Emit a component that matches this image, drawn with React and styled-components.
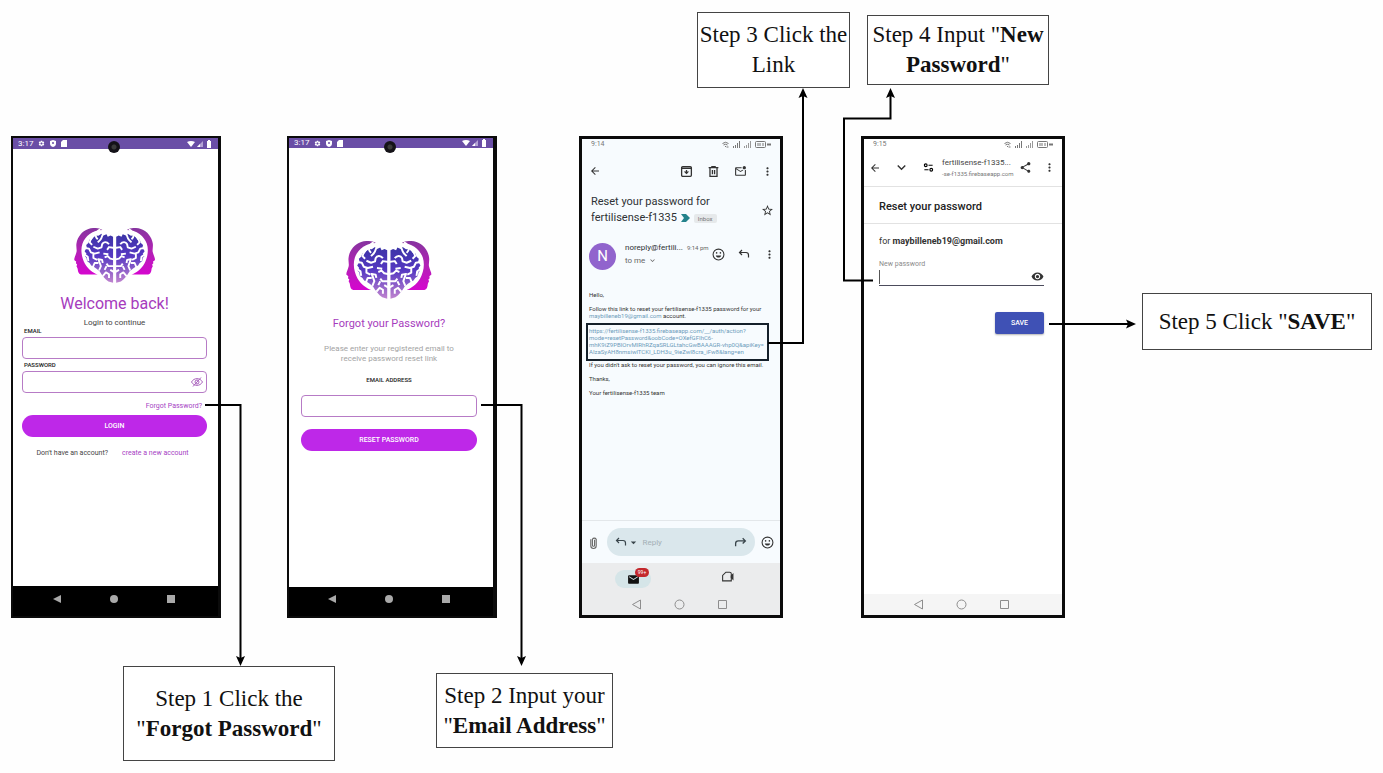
import React, { useId } from "react";
import styled, { createGlobalStyle } from "styled-components";
import {
  MdArrowBack,
  MdMoreVert,
  MdStarOutline,
  MdOutlineMarkEmailUnread,
  MdShare,
  MdVisibility,
  MdMail,
  MdSettings,
  MdExpandMore,
  MdArrowDropDown,
} from "react-icons/md";

const GlobalStyle = createGlobalStyle`
  *, *::before, *::after { box-sizing: border-box; }
  body { margin: 0; background: #fefefe; font-family: Roboto, "Liberation Sans", sans-serif; }
  button, input { font-family: inherit; }
  svg { display: block; flex: none; }
  p, h1, h2 { margin: 0; font-weight: 400; }
`;

/* ---------- canvas ---------- */

const Canvas = styled.main`
  position: relative;
  min-height: 100vh;
  overflow: hidden;
`;

const Connectors = styled.svg`
  position: absolute;
  inset: 0;
  width: 100%;
  height: 100%;
  pointer-events: none;
`;

const Note = styled.div`
  position: absolute;
  left: ${(p) => p.$x}px;
  top: ${(p) => p.$y}px;
  width: ${(p) => p.$w}px;
  height: ${(p) => p.$h}px;
  display: flex;
  align-items: center;
  justify-content: center;
  border: 1px solid #444;
  background: #fff;
  color: #111;
  font: 23px/30px "Liberation Serif", serif;
  text-align: center;
  white-space: nowrap;
`;

const Phone = styled.section`
  position: absolute;
  left: ${(p) => p.$x}px;
  top: 136px;
  width: ${(p) => p.$w}px;
  height: 482px;
  display: flex;
  flex-direction: column;
  border: solid #0b0b0b;
  border-width: ${(p) => p.$border};
  background: ${(p) => p.$bg || "#fff"};
`;

/* ---------- app screens ---------- */

const AppStatus = styled.div`
  position: relative;
  display: flex;
  align-items: center;
  justify-content: space-between;
  height: ${(p) => p.$h}px;
  padding: 0 5px;
  background: #6a4ea6;
  color: #fff;
  font-size: 8px;
  line-height: 10px;
`;

const Cluster = styled.span`
  display: flex;
  align-items: center;
  gap: ${(p) => p.$gap || 4}px;
`;

const Camera = styled.span`
  position: absolute;
  left: 95px;
  top: 3px;
  width: 12px;
  height: 12px;
  border-radius: 50%;
  background: radial-gradient(circle, #3a3a3a 0 2px, #141218 3px);
`;

const AppBody = styled.div`
  flex: 1;
  display: flex;
  flex-direction: column;
  padding: ${(p) => p.$pad};
  text-align: center;
`;

const LogoSvg = styled.svg`
  align-self: center;
  height: ${(p) => p.$h}px;
`;

const AppTitle = styled.h1`
  margin-top: ${(p) => p.$mt}px;
  color: #a63bbd;
  font-size: ${(p) => p.$size}px;
  line-height: ${(p) => p.$lh}px;
`;

const Subtitle = styled.p`
  margin-top: 3px;
  color: #444;
  font-size: 8px;
  line-height: 8px;
`;

const Hint = styled.p`
  margin-top: 12px;
  color: #a3a3a3;
  font-size: 8px;
  line-height: 10px;
`;

const Fields = styled.div`
  display: grid;
  gap: 2px;
`;

const FieldLabel = styled.label`
  margin: ${(p) => p.$margin || "0 2px"};
  color: #222;
  font-size: 6px;
  line-height: 8px;
  font-weight: 500;
  text-align: ${(p) => p.$align || "left"};
`;

const Field = styled.div`
  display: flex;
  align-items: center;
  height: 22px;
  padding: 0 3px;
  border: 1px solid #b77bc6;
  border-radius: 4px;
  background: #fff;
`;

const BareInput = styled.input`
  flex: 1;
  min-width: 0;
  padding: 0;
  border: 0;
  outline: 0;
  background: transparent;
  font-size: 8px;
`;

const IconButton = styled.button`
  display: flex;
  padding: 0;
  border: 0;
  background: none;
  color: ${(p) => p.$color || "#333"};
`;

const PinkLink = styled.a`
  color: #a63fc4;
  font-size: 7px;
  line-height: 8px;
  text-decoration: none;
`;

const ForgotRow = styled.div`
  display: flex;
  justify-content: flex-end;
  padding: 9px 5px 5px;
`;

const PillButton = styled.button`
  height: 22px;
  margin-top: ${(p) => p.$mt || 0}px;
  padding: 0;
  border: 0;
  border-radius: 11px;
  background: #be28e8;
  color: #fff;
  font-size: 7px;
  font-weight: 500;
`;

const SignUp = styled.p`
  display: flex;
  justify-content: center;
  gap: 14px;
  margin-top: 12px;
  color: #444;
  font-size: 7px;
  line-height: 8px;
  padding-right: 4px;
`;

const DarkNav = styled.nav`
  display: flex;
  align-items: center;
  justify-content: center;
  gap: 49px;
  height: ${(p) => p.$h}px;
  padding: 0 4px 5px 0;
  background: #000;
`;

/* ---------- mail / browser screens ---------- */

const PhoneStatus = styled.div`
  display: flex;
  align-items: center;
  justify-content: space-between;
  height: 10px;
  padding: 0 9px;
  color: #777;
  font-size: 7px;
  line-height: 10px;
`;

const MailToolbar = styled.div`
  display: flex;
  align-items: center;
  justify-content: space-between;
  height: 44px;
  padding: 0 6px 0 7px;
`;

const SubjectRow = styled.div`
  display: flex;
  align-items: center;
  justify-content: space-between;
  padding: 1px 6px 0 9px;
`;

const Subject = styled.h1`
  color: #2e3235;
  font-size: 11px;
  line-height: 16px;
`;

const SubjectLine = styled.span`
  display: flex;
  align-items: center;
  gap: 4px;
`;

const Chip = styled.span`
  padding: 0 4px;
  border-radius: 2px;
  background: #e6e9eb;
  color: #777;
  font-size: 6px;
  line-height: 9px;
`;

const Sender = styled.div`
  display: flex;
  align-items: center;
  height: 28px;
  margin: 16px 4px 0 7px;
`;

const Avatar = styled.span`
  width: 27px;
  height: 27px;
  margin-right: 9px;
  border-radius: 50%;
  background: #9164cd;
  color: #fff;
  font-size: 15px;
  line-height: 27px;
  text-align: center;
`;

const SenderText = styled.div`
  flex: 1;
  padding-bottom: 4px;
  color: #2e3235;
  font-size: 8px;
  line-height: 13px;
  white-space: nowrap;
`;

const SenderActions = styled.div`
  display: flex;
  gap: 13px;
  padding-bottom: 4px;
`;

const Muted = styled.span`
  display: flex;
  align-items: center;
  gap: 3px;
  color: #666;
  font-size: ${(p) => p.$size}px;
`;

const MailBody = styled.div`
  flex: 1;
  padding: 21px 6px 0 7px;
  color: #333;
  font-size: 6px;
  line-height: 7px;
  white-space: nowrap;
`;

const Para = styled.p`
  margin-bottom: ${(p) => (p.$tight ? 4 : 7)}px;
`;

const BodyLink = styled.a`
  color: #6d9bbb;
  text-decoration: none;
`;

const LinkFrame = styled.p`
  width: 183px;
  height: 38px;
  margin: 0 0 0 -3px;
  padding: 2px 1px;
  border: 2px solid #15202a;
`;

const ReplyBar = styled.div`
  display: flex;
  align-items: center;
  justify-content: space-between;
  height: 43px;
  padding: 0 6px 0 5px;
  border-top: 1px solid #e3e7ea;
`;

const ReplyPill = styled.button`
  display: flex;
  align-items: center;
  width: 148px;
  height: 28px;
  padding: 0 8px;
  border: 0;
  border-radius: 14px;
  background: #dae7ec;
  color: #a4b0b6;
  font-size: 8px;
`;

const PillIcon = styled.span`
  display: flex;
  color: #39454b;
`;

const Grow = styled.span`
  flex: 1;
  padding-left: 3px;
  text-align: left;
`;

const MailTabs = styled.nav`
  display: flex;
  justify-content: space-between;
  height: 31px;
  padding: 7px 46px 0 33px;
  background: #ebeced;
`;

const TabPill = styled.button`
  position: relative;
  display: flex;
  align-items: center;
  justify-content: center;
  width: 36px;
  height: 18px;
  padding: 0;
  border: 0;
  border-radius: 9px;
  background: #d5e5e8;
  color: #111;
`;

const Badge = styled.span`
  position: absolute;
  left: 20px;
  top: -2px;
  width: 14px;
  border-radius: 5px;
  background: #c3282d;
  color: #fff;
  font-size: 5px;
  line-height: 9px;
`;

const LightNav = styled.nav`
  display: flex;
  align-items: center;
  justify-content: center;
  gap: 32px;
  height: 21px;
  padding-right: 3px;
  background: ${(p) => p.$bg};
`;

const BrowserBar = styled.div`
  display: flex;
  align-items: center;
  height: 38px;
  padding: 0 6px 0 5px;
  border-bottom: 1px solid #e2e2e2;
`;

const Address = styled.div`
  flex: 1;
  margin: 0 5px 0 8px;
  color: #444;
  font-size: 8px;
  line-height: 11px;
  white-space: nowrap;

  small {
    display: block;
    color: #777;
    font-size: 6px;
  }
`;

const Spacer = styled.span`
  width: ${(p) => p.$w}px;
`;

const ResetHeading = styled.h1`
  padding: 3px 15px 0;
  border-bottom: 1px solid #e2e2e2;
  color: #222;
  font-size: 11px;
  font-weight: 500;
  line-height: 33px;
`;

const ResetForm = styled.form`
  flex: 1;
  display: flex;
  flex-direction: column;
  padding: 11px 18px 0 15px;
`;

const ForLine = styled.p`
  color: #333;
  font-size: 9px;
  line-height: 12px;

  b { font-weight: 700; }
`;

const GreyLabel = styled.label`
  margin-top: 13px;
  color: #8b8b8b;
  font-size: 7px;
  line-height: 8px;
`;

const Underlined = styled.div`
  display: flex;
  align-items: center;
  height: 18px;
  border-bottom: 1px solid #4c4c5c;
`;

const Caret = styled.span`
  width: 1px;
  height: 14px;
  background: #555;
`;

const SaveButton = styled.button`
  align-self: flex-end;
  width: 49px;
  height: 22px;
  margin-top: 26px;
  padding: 0;
  border: 0;
  border-radius: 2px;
  background: #3f51b5;
  box-shadow: 0 1px 2px rgba(0, 0, 0, 0.3);
  color: #fff;
  font-size: 7px;
  font-weight: 500;
`;

/* ---------- drawings ---------- */

function BrainHalf({ head, brain }) {
  return (
    <>
      <path
        fill={`url(#${head})`}
        d="M91 6C79-1 61-2 46 3C25 10 11 29 8 49C6 60 10 70 8 77C6 86 0 96 1 102C2 105 7 105 7 108L6 113L10 117L8 122C10 126 12 129 12 133C13 142 16 149 25 149L76 149C62 143 45 132 35 114C25 96 20 72 27 50C35 26 60 6 91 6Z"
      />
      <path
        fill={`url(#${brain})`}
        d="M125 28L117 24L108 28L104 20L94 24L88 18L78 25L70 24L62 30L56 38L50 37L46 48L39 54L41 62L34 74L40 82L35 90L40 95L42 106L50 112L55 120L63 124L72 130L82 138L88 148L96 158L102 165L110 171L125 175Z"
      />
      <g fill="none" stroke="#fff" strokeWidth="6" strokeLinejoin="round">
        <path d="M84 4C66 14 66 27 76 36M68 20C58 26 54 32 50 46L58 54M98 10C88 22 92 30 84 38L76 46M112 52C104 42 94 44 90 52L88 62L76 66L62 60M130 64L112 61L106 70M34 64L48 66L54 78L66 82L82 78M32 84L44 92L46 106M94 82L110 84M62 82L62 96L74 102M130 101L116 98L108 90L98 94M60 126L66 112L78 112M80 136L86 122L78 100L90 102L92 112M130 122L110 122L104 114M104 122L98 134M130 142L116 134M92 154L102 142L112 148L112 160" />
      </g>
    </>
  );
}

function Logo({ height }) {
  const id = useId();
  const head = `${id}h`;
  const brain = `${id}b`;
  return (
    <LogoSvg $h={height} viewBox="0 0 260 176" role="img" aria-label="Fertilisense">
      <defs>
        <linearGradient id={head} x1="0" y1="0" x2="0" y2="1">
          <stop offset="0" stopColor="#86349f" />
          <stop offset="0.5" stopColor="#b321b5" />
          <stop offset="1" stopColor="#d506cf" />
        </linearGradient>
        <linearGradient id={brain} x1="0" y1="0" x2="0" y2="1">
          <stop offset="0" stopColor="#3b34a6" />
          <stop offset="0.45" stopColor="#5638c2" />
          <stop offset="1" stopColor="#c084cf" />
        </linearGradient>
      </defs>
      <BrainHalf head={head} brain={brain} />
      <g transform="translate(260 0) scale(-1 1)">
        <BrainHalf head={head} brain={brain} />
      </g>
    </LogoSvg>
  );
}

function Line({ w = 12, d, sw = 2, children }) {
  return (
    <svg width={w} height={w} viewBox="0 0 24 24" fill="none" stroke="currentColor" strokeWidth={sw} aria-hidden="true">
      {d && <path d={d} />}
      {children}
    </svg>
  );
}

const Archive = () => (
  <Line w={13} sw={2.4}>
    <rect x="3" y="3" width="18" height="18" rx="2" />
    <path d="M3 6h18M12 9v6" />
    <path d="M7 12h10l-5 5z" fill="currentColor" stroke="none" />
  </Line>
);
const Trash = () => <Line w={13} sw={2.4} d="M3 5h18M9 5V3h6v2M5.500 5v16h13V5M10 9v8M14 9v8" />;
const Smile = () => (
  <Line w={13} sw={2}>
    <circle cx="12" cy="12" r="10" />
    <path d="M7 14h10c-1 5-9 5-10 0z" fill="currentColor" stroke="none" />
    <circle cx="8.500" cy="9" r="1.500" fill="currentColor" stroke="none" />
    <circle cx="15.500" cy="9" r="1.500" fill="currentColor" stroke="none" />
  </Line>
);
const ReplyArrow = () => <Line w={12} sw={2.4} d="M8 4L3 9l5 5M3 9h13q5 0 5 5v5" />;
const ForwardArrow = () => <Line w={13} sw={2.4} d="M16 4l5 5-5 5M21 9H8q-5 0-5 5v5" />;
const Clip = () => <Line w={13} d="M7 6v12a5 5 0 0 0 10 0V6a4 4 0 0 0-7 0v11a2 2 0 0 0 4 0V7" />;
const Meet = () => (
  <Line w={13}>
    <path d="M9 4h7q3 0 3 3v13H3V10z" />
    <path d="M19 11l3-3v9l-3-3z" fill="currentColor" />
  </Line>
);
const Tune = () => (
  <Line w={11} sw={2.4} d="M12 7h9M3 17h9">
    <circle cx="6" cy="7" r="3" />
    <circle cx="18" cy="17" r="3" />
  </Line>
);
const EyeOff = () => (
  <Line w={12} d="M1 12C6 3 18 3 23 12C18 21 6 21 1 12zM4 21L20 3">
    <circle cx="12" cy="12" r="4" />
  </Line>
);
const Tag = () => (
  <svg width="9" height="8" viewBox="0 0 9 8" aria-hidden="true">
    <path d="M0 0h5l4 4-4 4H0l3-4z" fill="#23828b" />
  </svg>
);

function AppStatusBar({ h }) {
  return (
    <AppStatus $h={h}>
      <Cluster $gap={5}>
        3:17
        <MdSettings size={7} />
        <svg width="6" height="7" viewBox="0 0 12 14">
          <path d="M6 0l6 2v5q0 5-6 7Q0 12 0 7V2z" fill="#fff" />
          <circle cx="6" cy="6" r="2" fill="#6a4ea6" />
        </svg>
        <svg width="6" height="7" viewBox="0 0 6 7">
          <path d="M2 0h4v7H0V2z" fill="#fff" />
        </svg>
      </Cluster>
      <Camera />
      <Cluster $gap={2}>
        <svg width="8" height="6" viewBox="0 0 8 6"><path d="M0 1q4-2 8 0L4 6z" fill="#fff" /></svg>
        <svg width="6" height="6" viewBox="0 0 6 6">
          <path d="M6 0v6H0z" fill="#b3a2d4" />
          <path d="M3 3v3H0z" fill="#fff" />
        </svg>
        <svg width="8" height="8" viewBox="0 0 8 8"><path d="M2 1h1V0h2v1h1v7H2z" fill="#fff" /></svg>
      </Cluster>
    </AppStatus>
  );
}

function PhoneStatusBar({ time }) {
  return (
    <PhoneStatus>
      {time}
      <Cluster $gap={4}>
        <svg width="7" height="7" viewBox="0 0 14 14" fill="none" stroke="#777" strokeWidth="2">
          <path d="M1 5q6-5 12 0M3 8q4-3 8 0M6 11h2M9 12h4" />
        </svg>
        <svg width="7" height="7" viewBox="0 0 7 7" fill="#777"><path d="M0 5h1v2H0zM2 4h1v3H2zM4 2h1v5H4zM6 0h1v7H6z" /></svg>
        <svg width="7" height="7" viewBox="0 0 7 7" fill="#999"><path d="M0 5h1v2H0zM2 4h1v3H2zM4 2h1v5H4zM6 0h1v7H6z" /></svg>
        <svg width="16" height="7" viewBox="0 0 16 7" fill="none" stroke="#777">
          <rect x="0.500" y="0.500" width="10" height="6" rx="1" />
          <path d="M3 2v3M5 2v3M8 2v3M12 3.500h4M13 2v3M15 2v3" />
        </svg>
      </Cluster>
    </PhoneStatus>
  );
}

function DarkNavBar({ h }) {
  return (
    <DarkNav $h={h}>
      <svg width="8" height="8" viewBox="0 0 8 8"><path d="M8 0v8L0 4z" fill="#a9a9a9" /></svg>
      <svg width="8" height="8" viewBox="0 0 8 8"><circle cx="4" cy="4" r="4" fill="#a9a9a9" /></svg>
      <svg width="8" height="8" viewBox="0 0 8 8"><path d="M0 0h8v8H0z" fill="#a9a9a9" /></svg>
    </DarkNav>
  );
}

function LightNavBar({ bg }) {
  return (
    <LightNav $bg={bg}>
      <svg width="11" height="11" viewBox="0 0 11 11" fill="none" stroke="#8d8d8d"><path d="M9.500 1v9l-8-4.500z" /></svg>
      <svg width="11" height="11" viewBox="0 0 11 11" fill="none" stroke="#8d8d8d"><circle cx="5.500" cy="5.500" r="4.500" /></svg>
      <svg width="11" height="11" viewBox="0 0 11 11" fill="none" stroke="#8d8d8d"><path d="M1.500 1.500h8v8h-8z" /></svg>
    </LightNav>
  );
}

/* ---------- phones ---------- */

function LoginPhone() {
  return (
    <Phone $x={11} $w={210} $border="2px 3px 2px 2px">
      <AppStatusBar h={11} />
      <AppBody $pad="79px 11px 0 9px">
        <Logo height={55} />
        <AppTitle $mt={9} $size={16} $lh={24}>Welcome back!</AppTitle>
        <Subtitle>Login to continue</Subtitle>
        <Fields>
          <FieldLabel htmlFor="email">EMAIL</FieldLabel>
          <Field><BareInput id="email" type="email" /></Field>
          <FieldLabel htmlFor="password">PASSWORD</FieldLabel>
          <Field>
            <BareInput id="password" type="password" />
            <IconButton type="button" aria-label="Show password" $color="#a963bd"><EyeOff /></IconButton>
          </Field>
        </Fields>
        <ForgotRow><PinkLink href="#forgot">Forgot Password?</PinkLink></ForgotRow>
        <PillButton type="button">LOGIN</PillButton>
        <SignUp>
          Don't have an account? <PinkLink href="#signup">create a new account</PinkLink>
        </SignUp>
      </AppBody>
      <DarkNavBar h={30} />
    </Phone>
  );
}

function ForgotPhone() {
  return (
    <Phone $x={287} $w={210} $border="2px 4px 2px 2px">
      <AppStatusBar h={10} />
      <AppBody $pad="93px 16px 0 12px">
        <Logo height={58} />
        <AppTitle $mt={17} $size={11} $lh={16}>Forgot your Password?</AppTitle>
        <Hint>
          Please enter your registered email to
          <br />
          receive password reset link
        </Hint>
        <FieldLabel htmlFor="address" $align="center" $margin="12px 0 11px">EMAIL ADDRESS</FieldLabel>
        <Field><BareInput id="address" type="email" /></Field>
        <PillButton type="button" $mt={12}>RESET PASSWORD</PillButton>
      </AppBody>
      <DarkNavBar h={29} />
    </Phone>
  );
}

function MailPhone() {
  return (
    <Phone $x={579} $w={204} $border="3px" $bg="#f7fbfe">
      <PhoneStatusBar time="9:14" />
      <MailToolbar>
        <IconButton aria-label="Back"><MdArrowBack size={12} /></IconButton>
        <Cluster $gap={14}>
          <IconButton aria-label="Archive"><Archive /></IconButton>
          <IconButton aria-label="Delete"><Trash /></IconButton>
          <IconButton aria-label="Mark unread"><MdOutlineMarkEmailUnread size={13} /></IconButton>
          <IconButton aria-label="More"><MdMoreVert size={13} /></IconButton>
        </Cluster>
      </MailToolbar>
      <SubjectRow>
        <Subject>
          Reset your password for
          <SubjectLine>fertilisense-f1335 <Tag /><Chip>Inbox</Chip></SubjectLine>
        </Subject>
        <IconButton aria-label="Star"><MdStarOutline size={13} /></IconButton>
      </SubjectRow>
      <Sender>
        <Avatar>N</Avatar>
        <SenderText>
          <Cluster>noreply@fertili... <Muted $size={6}>9:14 pm</Muted></Cluster>
          <Muted $size={8}>to me <MdExpandMore size={9} /></Muted>
        </SenderText>
        <SenderActions>
          <IconButton aria-label="React"><Smile /></IconButton>
          <IconButton aria-label="Reply"><ReplyArrow /></IconButton>
          <IconButton aria-label="More options"><MdMoreVert size={13} /></IconButton>
        </SenderActions>
      </Sender>
      <MailBody>
        <Para>Hello,</Para>
        <Para $tight>
          Follow this link to reset your fertilisense-f1335 password for your
          <br />
          <BodyLink href="#mail">maybilleneb19@gmail.com</BodyLink> account.
        </Para>
        <LinkFrame>
          <BodyLink href="#reset">
            https://fertilisense-f1335.firebaseapp.com/__/auth/action?
            <br />
            mode=resetPassword&amp;oobCode=OXefGFIhC6-
            <br />
            mhK9iZ9PBIOrvMIRhRZqaSRLGLtahcGwBAAAGR-vhp0Q&amp;apiKey=
            <br />
            AIzaSyAH8nmsiwlTCKI_LDH3u_9ieZwI8cra_iFw8&amp;lang=en
          </BodyLink>
        </LinkFrame>
        <Para>If you didn't ask to reset your password, you can ignore this email.</Para>
        <Para>Thanks,</Para>
        <Para>Your fertilisense-f1335 team</Para>
      </MailBody>
      <ReplyBar>
        <IconButton aria-label="Attach" $color="#666"><Clip /></IconButton>
        <ReplyPill type="button">
          <PillIcon><ReplyArrow /></PillIcon>
          <PillIcon><MdArrowDropDown size={13} /></PillIcon>
          <Grow>Reply</Grow>
          <PillIcon><ForwardArrow /></PillIcon>
        </ReplyPill>
        <IconButton aria-label="Emoji"><Smile /></IconButton>
      </ReplyBar>
      <MailTabs>
        <TabPill type="button" aria-label="Mail">
          <MdMail size={13} />
          <Badge>99+</Badge>
        </TabPill>
        <IconButton aria-label="Meet"><Meet /></IconButton>
      </MailTabs>
      <LightNavBar bg="#ebeced" />
    </Phone>
  );
}

function ResetPhone() {
  return (
    <Phone $x={861} $w={204} $border="3px">
      <PhoneStatusBar time="9:15" />
      <BrowserBar>
        <IconButton aria-label="Back"><MdArrowBack size={12} /></IconButton>
        <Spacer $w={12} />
        <IconButton aria-label="Collapse"><MdExpandMore size={17} /></IconButton>
        <Spacer $w={13} />
        <Tune />
        <Address>
          fertilisense-f1335...
          <small>-se-f1335.firebaseapp.com</small>
        </Address>
        <IconButton aria-label="Share"><MdShare size={13} /></IconButton>
        <Spacer $w={11} />
        <IconButton aria-label="More"><MdMoreVert size={13} /></IconButton>
      </BrowserBar>
      <ResetHeading>Reset your password</ResetHeading>
      <ResetForm onSubmit={(e) => e.preventDefault()}>
        <ForLine>for <b>maybilleneb19@gmail.com</b></ForLine>
        <GreyLabel htmlFor="new-password">New password</GreyLabel>
        <Underlined>
          <Caret />
          <BareInput id="new-password" type="password" />
          <IconButton type="button" aria-label="Show password"><MdVisibility size={13} /></IconButton>
        </Underlined>
        <SaveButton>SAVE</SaveButton>
      </ResetForm>
      <LightNavBar bg="#f5f5f5" />
    </Phone>
  );
}

const routes = [
  "M205 405H240.500V660",
  "M481 405H521.500V660",
  "M768 343H803V94",
  "M873 280.500H844V118.500H890.500V94",
  "M1049 324H1130",
];

export default function App() {
  return (
    <>
      <GlobalStyle />
      <Canvas>
        <LoginPhone />
        <ForgotPhone />
        <MailPhone />
        <ResetPhone />
        <Note $x={123} $y={666} $w={212} $h={95}>
          <p>Step 1 Click the<br />"<b>Forgot Password</b>"</p>
        </Note>
        <Note $x={436} $y={673} $w={177} $h={75}>
          <p>Step 2 Input your<br />"<b>Email Address</b>"</p>
        </Note>
        <Note $x={697} $y={12} $w={153} $h={76}>
          <p>Step 3 Click the<br />Link</p>
        </Note>
        <Note $x={867} $y={15} $w={182} $h={70}>
          <p>Step 4 Input "<b>New<br />Password</b>"</p>
        </Note>
        <Note $x={1142} $y={293} $w={230} $h={57}>
          <p>Step 5 Click "<b>SAVE</b>"</p>
        </Note>
        <Connectors aria-hidden="true">
          <defs>
            <marker id="tip" viewBox="0 0 10 10" refX="4" refY="5" markerWidth="10" markerHeight="10" markerUnits="userSpaceOnUse" orient="auto">
              <path d="M0 0.500L10 5L0 9.500L2 5z" fill="#000" />
            </marker>
          </defs>
          {routes.map((d) => (
            <path key={d} d={d} fill="none" stroke="#000" strokeWidth="2" markerEnd="url(#tip)" />
          ))}
        </Connectors>
      </Canvas>
    </>
  );
}
